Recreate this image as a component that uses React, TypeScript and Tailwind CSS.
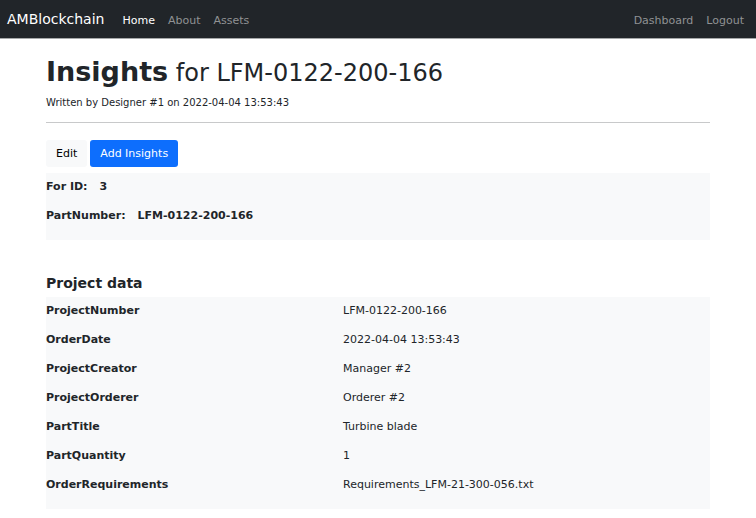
import React from "react";

const summary = [
  { label: "For ID:", value: "3" },
  { label: "PartNumber:", value: "LFM-0122-200-166" },
];

const project = [
  { label: "ProjectNumber", value: "LFM-0122-200-166" },
  { label: "OrderDate", value: "2022-04-04 13:53:43" },
  { label: "ProjectCreator", value: "Manager #2" },
  { label: "ProjectOrderer", value: "Orderer #2" },
  { label: "PartTitle", value: "Turbine blade" },
  { label: "PartQuantity", value: "1" },
  { label: "OrderRequirements", value: "Requirements_LFM-21-300-056.txt" },
];

function NavLink({ label, active = false }: { label: string; active?: boolean }) {
  return (
    <a
      href="#"
      aria-current={active ? "page" : undefined}
      className={active ? "text-white" : "text-[#909294] hover:text-white"}
    >
      {label}
    </a>
  );
}

export default function App() {
  return (
    <div className="min-h-screen bg-white font-['DejaVu_Sans',sans-serif] text-[11px] leading-[18px] text-[#212529]">
      <header className="border-b border-[#a6a8a9] bg-[#212529]">
        <nav className="flex items-baseline gap-[13px] px-[7px] pt-[9px] pb-2">
          <a href="#" className="mr-[5px] text-sm text-white">
            AMBlockchain
          </a>
          <NavLink label="Home" active />
          <NavLink label="About" />
          <NavLink label="Assets" />
          <div className="ml-auto flex gap-[13px] pr-[5px]">
            <NavLink label="Dashboard" />
            <NavLink label="Logout" />
          </div>
        </nav>
      </header>

      <main className="px-[46px] pt-[15px]">
        <h1 className="text-2xl leading-9">
          <strong className="text-[27px] font-bold">Insights</strong> for LFM-0122-200-166
        </h1>
        <p className="mt-1 text-[10px] leading-4">Written by Designer #1 on 2022-04-04 13:53:43</p>
        <hr className="mt-[11px] border-[#c8c9ca]" />

        <div className="mt-[17px] flex gap-[3px]">
          <button type="button" className="rounded-[3px] bg-[#f8f9fa] px-[10px] py-1 leading-[19px] text-black">
            Edit
          </button>
          <button type="button" className="rounded-[3px] bg-[#0d6efd] px-[10px] py-1 leading-[19px] text-white">
            Add Insights
          </button>
        </div>

        <dl className="mt-1.5 bg-[#f8f9fa] pt-[5px] pb-1 font-bold">
          {summary.map((row) => (
            <div key={row.label} className="flex gap-3 pb-[11px]">
              <dt>{row.label}</dt>
              <dd>{row.value}</dd>
            </div>
          ))}
        </dl>

        <h2 className="mt-[33px] text-sm font-bold">Project data</h2>
        <dl className="mt-1 bg-[#f8f9fa] pt-[5px] pb-1">
          {project.map((row) => (
            <div key={row.label} className="grid grid-cols-[297px_1fr] pb-[11px]">
              <dt className="font-bold">{row.label}</dt>
              <dd>{row.value}</dd>
            </div>
          ))}
        </dl>
      </main>
    </div>
  );
}
